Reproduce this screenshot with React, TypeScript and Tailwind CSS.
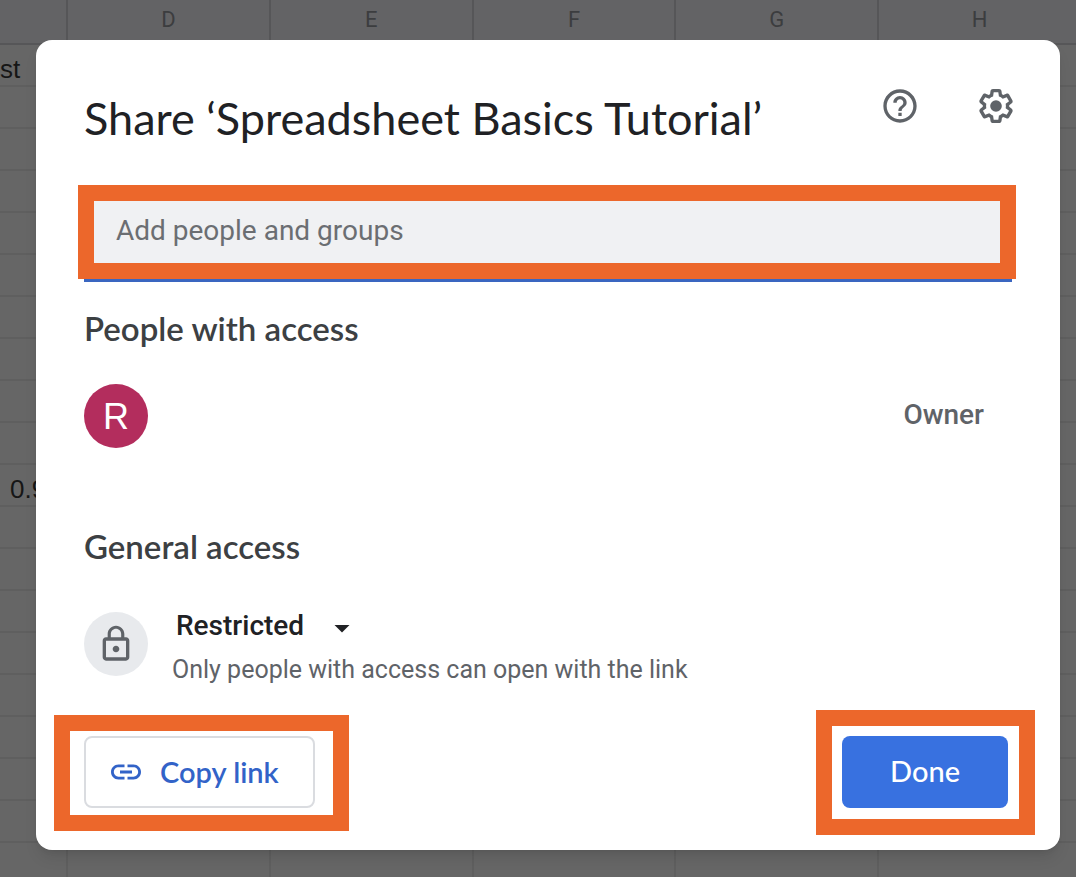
import React from "react";
import { MdArrowDropDown, MdHelpOutline, MdLink, MdLockOutline } from "react-icons/md";

const columns = ["D", "E", "F", "G", "H"];
const rows: string[] = Array.from({ length: 20 }, (_, i) => (i === 0 ? "st" : i === 10 ? "0.9" : ""));

function Sheet() {
  return (
    <table
      aria-label="Spreadsheet"
      className="w-[1082px] table-fixed border-separate border-spacing-0 bg-[#666666] font-['Liberation_Sans',sans-serif]"
    >
      <colgroup>
        <col className="w-[68px]" />
        {columns.map((c) => (
          <col key={c} />
        ))}
      </colgroup>
      <thead>
        <tr className="h-[45px] bg-[#636365] text-[22px] text-[#3c3d3f]">
          <td className="border-r-2 border-b-2 border-[#565658]" />
          {columns.map((c) => (
            <th key={c} className="border-r-2 border-b-2 border-[#565658] p-0 pb-1 font-['Roboto',sans-serif] font-normal">
              {c}
            </th>
          ))}
        </tr>
      </thead>
      <tbody>
        {rows.map((text, i) => (
          <tr key={i} className="h-[42px] text-[26px] leading-8 text-[#161616]">
            <td className="border-r-2 border-b-2 border-[#5f5f5f] p-0 pt-2">
              <div className={i === 0 ? "" : "pl-2.5"}>{text}</div>
            </td>
            {columns.map((c) => (
              <td key={c} className="border-r-2 border-b-2 border-[#5f5f5f] p-0" />
            ))}
          </tr>
        ))}
      </tbody>
    </table>
  );
}

function SettingsIcon() {
  return (
    <svg viewBox="0 0 24 24" className="size-10" fill="currentColor" aria-hidden="true">
      <path d="M13.85 22.25h-3.7c-.74 0-1.36-.54-1.45-1.27l-.27-1.89c-.27-.14-.53-.29-.79-.46l-1.8.72c-.7.26-1.47-.03-1.81-.65L2.2 15.53c-.35-.66-.2-1.44.36-1.88l1.53-1.19c-.01-.15-.02-.3-.02-.46 0-.15.01-.31.02-.46l-1.52-1.19c-.59-.45-.74-1.26-.37-1.88l1.85-3.19c.34-.62 1.11-.9 1.79-.63l1.81.73c.26-.17.52-.32.78-.46l.27-1.91c.09-.7.71-1.25 1.44-1.25h3.7c.74 0 1.36.54 1.45 1.27l.27 1.89c.27.14.53.29.79.46l1.8-.72c.71-.26 1.48.03 1.82.65l1.84 3.18c.36.66.2 1.44-.36 1.88l-1.52 1.19c.01.15.02.3.02.46s-.01.31-.02.46l1.52 1.19c.56.45.72 1.23.37 1.86l-1.86 3.22c-.34.62-1.11.9-1.8.63l-1.8-.72c-.26.17-.52.32-.78.46l-.27 1.91c-.1.68-.72 1.22-1.46 1.22zm-3.23-2h2.76l.37-2.55.53-.22c.44-.18.88-.44 1.34-.78l.45-.34 2.38.96 1.38-2.4-2.03-1.58.07-.56c.03-.26.06-.51.06-.78s-.03-.53-.06-.78l-.07-.56 2.03-1.58-1.39-2.4-2.39.96-.45-.35c-.42-.32-.87-.58-1.33-.77l-.52-.22-.37-2.55h-2.76l-.37 2.55-.53.21c-.44.19-.88.44-1.34.79l-.45.33-2.38-.95-1.39 2.39 2.03 1.58-.07.56a7 7 0 0 0-.06.79c0 .26.02.53.06.78l.07.56-2.03 1.58 1.38 2.4 2.39-.96.45.35c.43.33.86.58 1.33.77l.53.22.38 2.55z" />
      <circle cx="12" cy="12" r="3.5" />
    </svg>
  );
}

function Highlight({ className }: { className: string }) {
  return (
    <span
      aria-hidden="true"
      className={`pointer-events-none absolute border-[16px] border-[#ec672b] ${className}`}
    />
  );
}

export default function App() {
  return (
    <main className="relative min-h-screen overflow-hidden bg-[#666666] font-['Roboto',sans-serif]">
      <div className="absolute inset-0 overflow-hidden">
        <Sheet />
      </div>

      <div className="relative pt-10 pr-4 pb-6 pl-9">
        <section
          role="dialog"
          aria-labelledby="share-title"
          className="rounded-2xl bg-white px-12 pb-[42px] shadow-lg"
        >
          <header className="-mr-1 flex items-start justify-between pt-[46px] text-[#5f6368]">
            <h1 id="share-title" className="font-['Lato',sans-serif] text-[45px] leading-[64px] whitespace-nowrap text-[#202124]">
              Share ‘Spreadsheet Basics Tutorial’
            </h1>
            <div className="flex gap-14">
              <button type="button" aria-label="Help">
                <MdHelpOutline className="size-10" />
              </button>
              <button type="button" aria-label="Settings">
                <SettingsIcon />
              </button>
            </div>
          </header>

          <div className="relative mt-9">
            <input
              type="text"
              aria-label="Add people and groups"
              placeholder="Add people and groups"
              className="block h-24 w-full border-b-4 border-[#3a66c0] bg-[#f0f1f3] px-8 pb-1 text-[28px] text-[#202124] outline-none placeholder:text-[#6b6e72]"
            />
            <Highlight className="-top-px -right-1 bottom-[3px] -left-1.5" />
          </div>

          <h2 className="mt-[26px] font-['Lato',sans-serif] text-[33px] leading-10 font-semibold text-[#3c4043]">
            People with access
          </h2>
          <div className="mt-9 flex items-center justify-between pr-7">
            <span className="flex size-16 items-center justify-center rounded-full bg-[#b32d5d] pt-0.5 font-['Liberation_Sans',sans-serif] text-[36px] text-white">
              R
            </span>
            <span className="pb-0.5 text-[28px] font-medium text-[#5f6368]">Owner</span>
          </div>

          <h2 className="mt-[78px] font-['Lato',sans-serif] text-[33px] leading-10 font-semibold text-[#3c4043]">
            General access
          </h2>
          <div className="mt-[46px] flex items-start gap-6">
            <span className="flex size-16 items-center justify-center rounded-full bg-[#e8eaed] text-[#5f6368]">
              <MdLockOutline className="size-10" />
            </span>
            <div className="-mt-0.5">
              <div className="relative w-fit pl-1 text-[#202124]">
                <select
                  aria-label="General access"
                  className="block h-8 w-48 appearance-none bg-transparent text-[28px] leading-8 font-medium outline-none"
                >
                  <option>Restricted</option>
                </select>
                <MdArrowDropDown className="pointer-events-none absolute top-0 right-2 size-9" />
              </div>
              <p className="mt-3 text-[25px] leading-8 text-[#5f6368]">Only people with access can open with the link</p>
            </div>
          </div>

          <footer className="mt-[50px] flex justify-between pr-1 font-['Lato',sans-serif] text-[29px]">
            <div className="relative">
              <button
                type="button"
                className="flex h-[72px] items-center gap-4 rounded-lg border-2 border-[#dadce0] pr-[34px] pl-[22px] font-semibold text-[#3263c8]"
              >
                <MdLink className="size-9" />
                Copy link
              </button>
              <Highlight className="-top-[21px] -right-[34px] -bottom-[23px] -left-[30px]" />
            </div>
            <div className="relative">
              <button type="button" className="h-[72px] rounded-lg bg-[#3871e0] px-12 pb-0.5 font-medium text-white">
                Done
              </button>
              <Highlight className="-top-[26px] -right-[27px] -bottom-[27px] -left-[26px]" />
            </div>
          </footer>
        </section>
      </div>
    </main>
  );
}
